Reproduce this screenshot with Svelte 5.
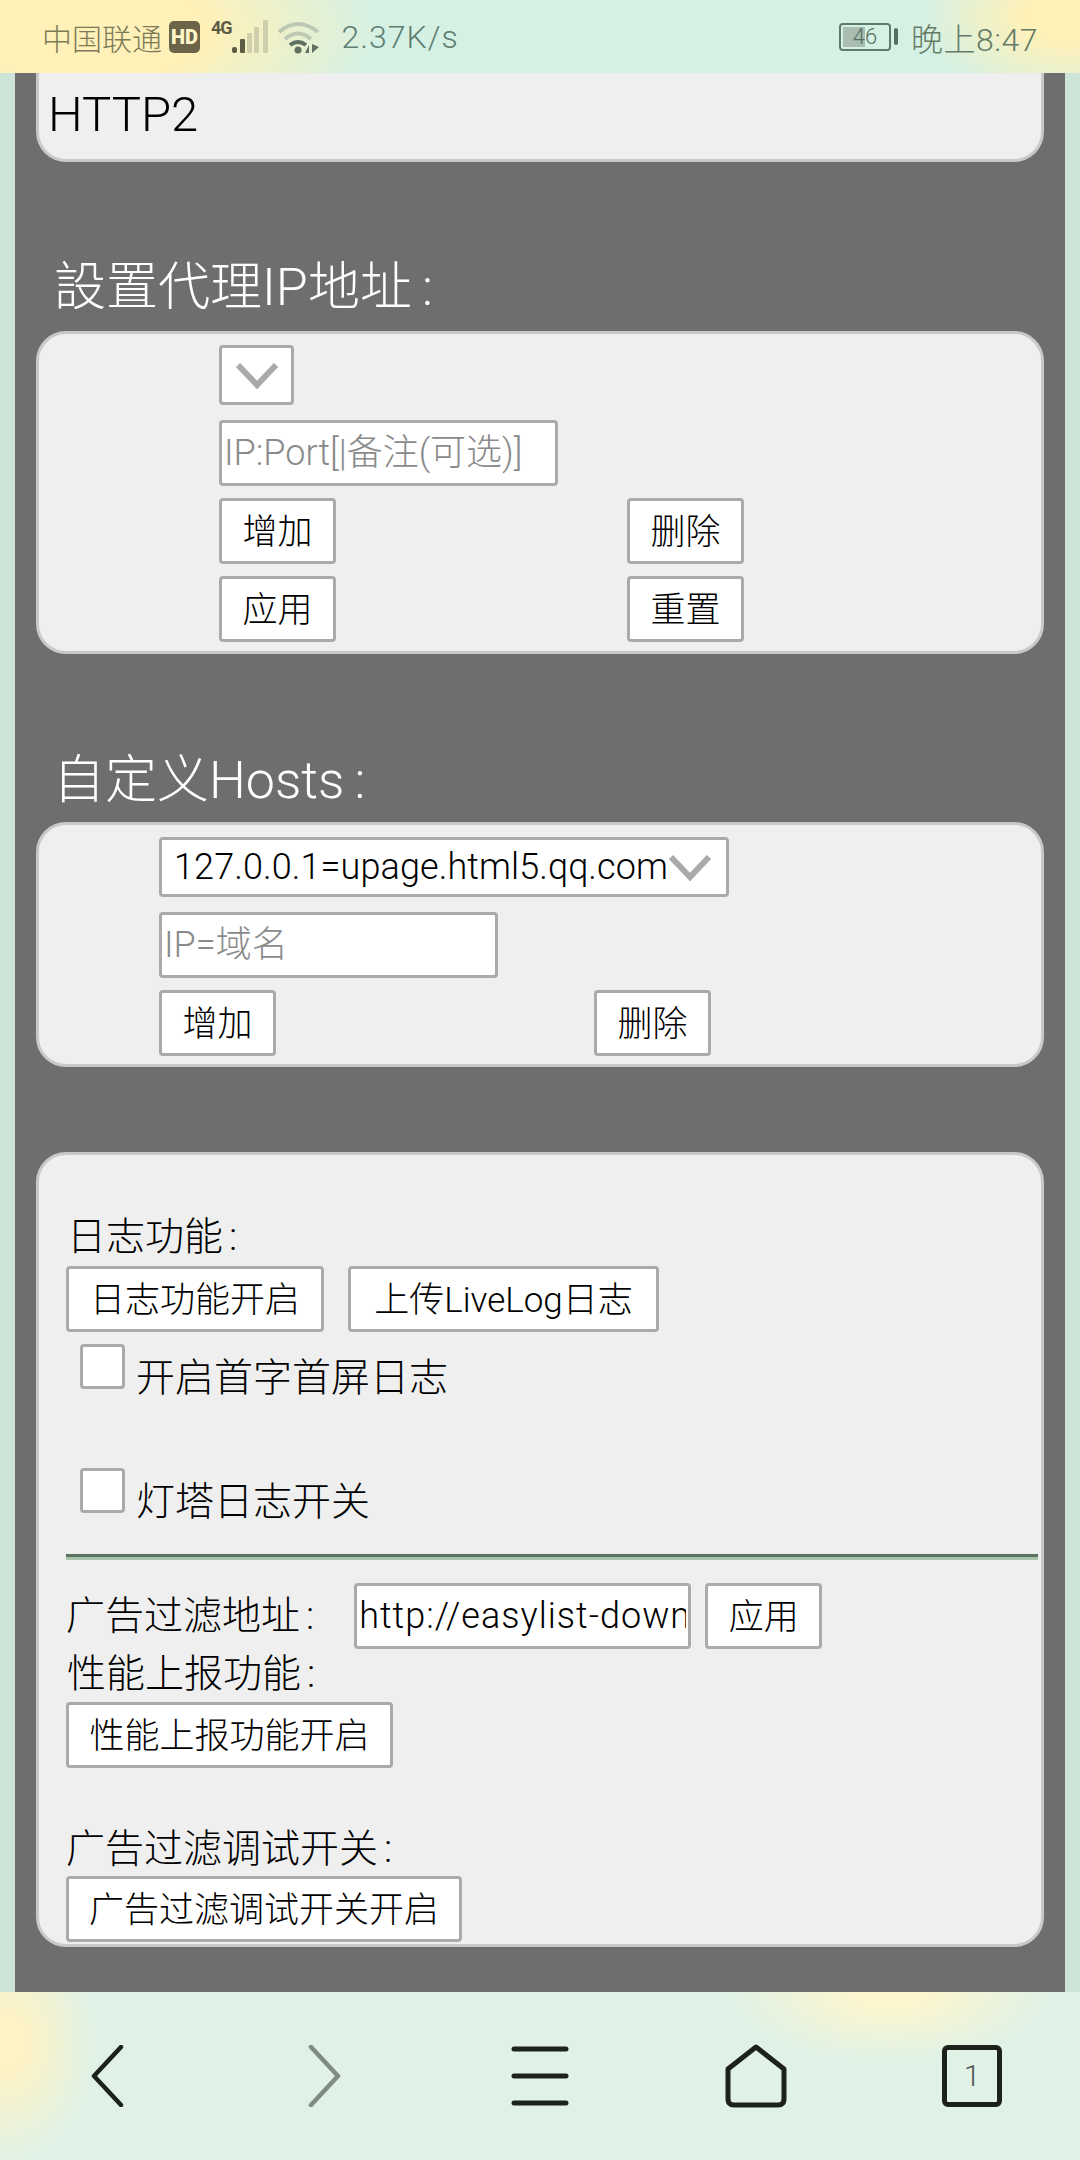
<script lang="ts">
	const ipButtons = [
		['增加', '删除'],
		['应用', '重置']
	];
</script>

<div class="screen">
	<header class="status">
		<div class="status-left">
			<span class="carrier">中国联通</span>
			<span class="hd">HD</span>
			<span class="net">4G</span>
			<svg class="signal" width="36" height="36" viewBox="0 0 36 36">
				<rect x="0" y="28" width="5" height="6" rx="2" fill="#5d5c45" />
				<rect x="8" y="20" width="5" height="14" rx="1" fill="#5d5c45" />
				<rect x="15" y="14" width="5" height="20" rx="1" fill="#cfcfae" />
				<rect x="22" y="8" width="5" height="26" rx="1" fill="#cfcfae" />
				<rect x="31" y="1" width="5" height="33" rx="1" fill="#cfcfae" />
			</svg>
			<svg class="wifi" width="42" height="36" viewBox="0 0 42 36" fill="none">
				<path d="M1 13 Q20 -3 40 13" stroke="#bcc8b4" stroke-width="4" />
				<path d="M7 20 Q20 9 33 20" stroke="#bcc8b4" stroke-width="4" />
				<path d="M12 26 Q20 20 28 26" stroke="#5f6f62" stroke-width="4" />
				<circle cx="20" cy="31" r="3.5" fill="#5f6f62" />
				<path d="M27 34 L31 26 V34 Z M34 25 V34 L41 28 Z" fill="#5f6f62" />
			</svg>
			<span class="speed">2.37K/s</span>
		</div>
		<div class="status-right">
			<div class="battery">
				<span class="battery-fill"></span>
				<span class="battery-num">46</span>
			</div>
			<span class="battery-nub"></span>
			<span class="clock">晚上8:47</span>
		</div>
	</header>

	<main class="page">
		<section class="card first">HTTP2</section>

		<h2 class="title proxy-title">設置代理IP地址<span class="colon">:</span></h2>
		<section class="card proxy">
			<div class="select empty">
				<svg class="chev" width="44" height="28" viewBox="0 0 44 28" fill="none">
					<path d="M3 4 L22 24 L41 4" stroke="#aaa" stroke-width="6" />
				</svg>
			</div>
			<input class="field proxy-input" placeholder="IP:Port[|备注(可选)]" />
			{#each ipButtons as row}
				<div class="btn-row proxy-row">
					<button class="btn narrow">{row[0]}</button>
					<button class="btn narrow">{row[1]}</button>
				</div>
			{/each}
		</section>

		<h2 class="title hosts-title">自定义Hosts<span class="colon">:</span></h2>
		<section class="card hosts">
			<div class="select wide">
				<span>127.0.0.1=upage.html5.qq.com</span>
				<svg class="chev" width="44" height="28" viewBox="0 0 44 28" fill="none">
					<path d="M3 4 L22 24 L41 4" stroke="#aaa" stroke-width="6" />
				</svg>
			</div>
			<input class="field hosts-input" placeholder="IP=域名" />
			<div class="btn-row hosts-row">
				<button class="btn narrow">增加</button>
				<button class="btn narrow">删除</button>
			</div>
		</section>

		<section class="card settings">
			<div class="label log-label">日志功能<span class="colon">:</span></div>
			<div class="log-buttons">
				<button class="btn log-on">日志功能开启</button>
				<button class="btn log-up">上传LiveLog日志</button>
			</div>
			<label class="check first-check">
				<input type="checkbox" />
				<span>开启首字首屏日志</span>
			</label>
			<label class="check second-check">
				<input type="checkbox" />
				<span>灯塔日志开关</span>
			</label>
			<hr />
			<div class="filter-row">
				<span class="label">广告过滤地址<span class="colon">:</span></span>
				<input class="field url" value="http://easylist-downloads.adblockplus.org" />
				<button class="btn narrow">应用</button>
			</div>
			<div class="label perf-label">性能上报功能<span class="colon">:</span></div>
			<button class="btn perf-btn">性能上报功能开启</button>
			<div class="label debug-label">广告过滤调试开关<span class="colon">:</span></div>
			<button class="btn debug-btn">广告过滤调试开关开启</button>
		</section>
	</main>

	<nav class="toolbar">
		<svg width="34" height="62" viewBox="0 0 34 62" fill="none">
			<path d="M30 2 L3 31 L30 60" stroke="#1c211c" stroke-width="4.5" stroke-linecap="round" stroke-linejoin="round" />
		</svg>
		<svg width="34" height="62" viewBox="0 0 34 62" fill="none">
			<path d="M4 2 L31 31 L4 60" stroke="#7f8c84" stroke-width="4.5" stroke-linecap="round" stroke-linejoin="round" />
		</svg>
		<svg width="58" height="62" viewBox="0 0 58 62" fill="none">
			<path d="M3 4 H55 M3 31 H55 M3 58 H55" stroke="#1c211c" stroke-width="5" stroke-linecap="round" />
		</svg>
		<svg width="62" height="64" viewBox="0 0 62 64" fill="none">
			<path d="M31 3 L59 25 V55 Q59 61 53 61 H9 Q3 61 3 55 V25 Z" stroke="#1c211c" stroke-width="5" stroke-linejoin="round" />
		</svg>
		<div class="tabs">1</div>
	</nav>
</div>

<style>
	:global(body) {
		margin: 0;
		background: #cfe4d8;
	}

	.screen {
		width: 1080px;
		height: 2160px;
		display: flex;
		flex-direction: column;
		overflow: hidden;
		font-family: Roboto, "Noto Sans CJK SC", sans-serif;
		font-weight: 300;
		color: #000;
	}

	.status {
		height: 73px;
		flex: none;
		display: flex;
		justify-content: space-between;
		align-items: center;
		padding: 0 42px;
		background:
			radial-gradient(ellipse 290px 130px at 90px 30px, #fff1b8 40%, rgba(255, 241, 184, 0) 100%),
			radial-gradient(ellipse 150px 90px at 1070px 15px, #fff1b8 30%, rgba(255, 241, 184, 0) 100%),
			#d5f1e4;
	}

	.status-left,
	.status-right {
		display: flex;
		align-items: center;
	}

	.carrier {
		font-size: 30px;
		color: #7c7b58;
	}

	.hd {
		width: 31px;
		height: 32px;
		margin-left: 7px;
		border-radius: 5px;
		background: #6b6449;
		color: #fff4c8;
		font-size: 20px;
		font-weight: 900;
		line-height: 32px;
		text-align: center;
	}

	.net {
		align-self: flex-start;
		margin: 2px 0 0 11px;
		font-size: 18px;
		font-weight: 700;
		letter-spacing: -1px;
		color: #5d5c45;
	}

	.wifi {
		margin-left: 10px;
	}

	.speed {
		margin-left: 22px;
		font-size: 32px;
		letter-spacing: 1px;
		color: #5f7d72;
	}

	.battery {
		position: relative;
		width: 48px;
		height: 24px;
		border: 2px solid #5f7a6c;
		border-radius: 4px;
		font-size: 22px;
		line-height: 24px;
		text-align: center;
		color: #56705f;
	}

	.battery-fill {
		position: absolute;
		left: 2px;
		top: 2px;
		bottom: 2px;
		width: 22px;
		background: #a9bdb1;
	}

	.battery-num {
		position: relative;
	}

	.battery-nub {
		width: 4px;
		height: 17px;
		margin-left: 3px;
		border-radius: 2px;
		background: #56705f;
	}

	.clock {
		margin-left: 13px;
		font-size: 32px;
		letter-spacing: 0.5px;
		color: #657b68;
	}

	.page {
		flex: 1;
		min-height: 0;
		margin: 0 15px;
		padding: 0 21px;
		background: #6e6e6e;
		overflow: hidden;
	}

	.card {
		box-sizing: border-box;
		background: #efefef;
		border: 3px solid #c9c9c9;
		border-radius: 30px;
	}

	.first {
		height: 89px;
		padding: 12px 0 0 9px;
		border-top: none;
		border-radius: 0 0 30px 30px;
		font-size: 49px;
		line-height: 60px;
	}

	.title {
		margin: 0;
		font-size: 52px;
		font-weight: 300;
		line-height: 60px;
		color: #fff;
	}

	.colon {
		padding: 0 4px 0 6px;
	}

	.title .colon {
		padding-left: 10px;
	}

	.proxy-title {
		margin-top: 96px;
		padding-left: 18px;
	}

	.proxy {
		height: 323px;
		margin-top: 13px;
		padding: 11px 0 0 180px;
	}

	.hosts-title {
		margin-top: 97px;
		padding-left: 17px;
	}

	.hosts {
		height: 245px;
		margin-top: 11px;
		padding: 12px 0 0 120px;
	}

	.select,
	.field,
	.btn {
		box-sizing: border-box;
		background: #fff;
		border: 3px solid #aaa;
		border-radius: 4px;
		font-family: inherit;
		font-weight: 300;
		color: #000;
	}

	.select {
		display: flex;
		align-items: center;
		height: 60px;
	}

	.select.empty {
		width: 75px;
		justify-content: center;
	}

	.select.wide {
		width: 570px;
		padding-left: 12px;
		font-size: 36px;
		letter-spacing: 0.1px;
		white-space: nowrap;
	}

	.chev {
		flex: none;
	}

	.field {
		display: block;
		height: 66px;
		padding: 0 2px;
		font-size: 36px;
		outline: none;
	}

	.field::placeholder {
		color: #8a8a8a;
		opacity: 1;
	}

	.proxy-input {
		width: 339px;
		margin-top: 15px;
	}

	.hosts-input {
		width: 339px;
		margin-top: 15px;
	}

	.btn {
		height: 66px;
		padding: 0 0 5px;
		font-size: 35px;
		white-space: nowrap;
	}

	.narrow {
		width: 117px;
	}

	.btn-row {
		display: flex;
		margin-top: 12px;
	}

	.proxy-row {
		gap: 291px;
	}

	.hosts-row {
		gap: 318px;
	}

	.settings {
		height: 795px;
		margin-top: 85px;
		padding: 0 0 0 27px;
	}

	.label {
		font-size: 39px;
		line-height: 50px;
	}

	.log-label {
		margin: 57px 0 0 1px;
	}

	.log-buttons {
		display: flex;
		gap: 24px;
		margin-top: 4px;
	}

	.log-on {
		width: 258px;
	}

	.log-up {
		width: 311px;
	}

	.check {
		display: flex;
		align-items: flex-start;
		margin-left: 14px;
		font-size: 39px;
		line-height: 50px;
	}

	.check input {
		appearance: none;
		box-sizing: border-box;
		width: 45px;
		height: 45px;
		margin: 0 11px 0 0;
		background: #fff;
		border: 3px solid #aaa;
		border-radius: 4px;
	}

	.check span {
		margin-top: 9px;
	}

	.first-check {
		margin-top: 12px;
	}

	.second-check {
		margin-top: 65px;
	}

	hr {
		box-sizing: border-box;
		width: 972px;
		height: 6px;
		margin: 27px 0 0;
		border: none;
		border-top: 3px solid #5e735f;
		border-bottom: 3px solid #a9c4ab;
	}

	.filter-row {
		display: flex;
		align-items: center;
		margin-top: 23px;
	}

	.url {
		width: 337px;
		margin-left: 36px;
		letter-spacing: 1px;
	}

	.filter-row .btn {
		margin-left: 14px;
	}

	.perf-label {
		margin: 0 0 0 1px;
	}

	.perf-btn {
		display: block;
		width: 327px;
		margin-top: 3px;
	}

	.debug-label {
		margin-top: 56px;
	}

	.debug-btn {
		display: block;
		width: 396px;
		margin-top: 2px;
	}

	.toolbar {
		height: 168px;
		flex: none;
		display: grid;
		grid-template-columns: repeat(5, 1fr);
		align-items: center;
		justify-items: center;
		padding: 0 0 1px;
		box-sizing: border-box;
		background:
			radial-gradient(ellipse 90px 120px at 5px 50px, #fff3c4 20%, rgba(255, 243, 196, 0) 100%),
			radial-gradient(ellipse 160px 70px at 890px 0, #fdf6cf 20%, rgba(253, 246, 207, 0) 100%),
			#e0f2e6;
	}

	.tabs {
		box-sizing: border-box;
		width: 60px;
		height: 62px;
		border: 5px solid #1c211c;
		border-radius: 6px;
		font-size: 30px;
		line-height: 52px;
		text-align: center;
		color: #555;
	}
</style>
